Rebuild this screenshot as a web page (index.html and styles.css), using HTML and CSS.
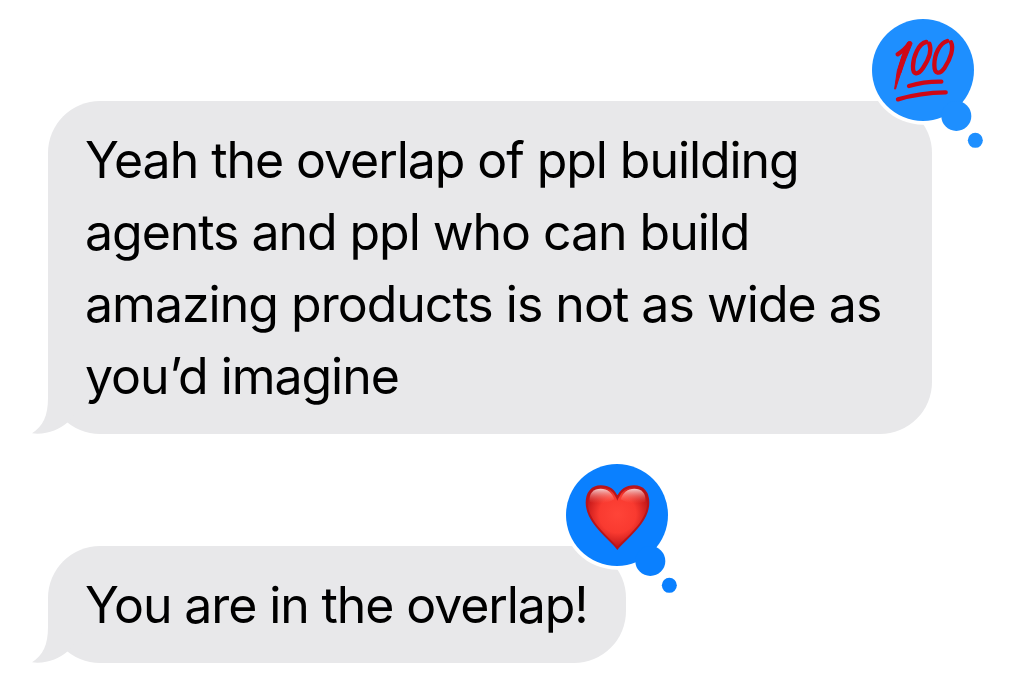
FILE: index.html
```html
<!DOCTYPE html>
<html lang="en">
<head>
    <meta charset="UTF-8">
    <meta name="viewport" content="width=device-width, initial-scale=1.0">
    <title>Messages</title>
    <link rel="stylesheet" href="styles.css">
</head>
<body>
    <main class="chat">
        <div class="bubble">
            <svg class="tail" viewBox="0 0 54 66" aria-hidden="true">
                <path d="M16 0V30C16 48 11 58 0 65.3C14 67 27 62 36 54L54 30V0Z"/>
            </svg>
            <p class="text">
                <span class="line line-1">Yeah the overlap of ppl building</span>
                <span class="line line-2">agents and ppl who can build</span>
                <span class="line line-3">amazing products is not as wide as</span>
                <span class="line line-4">you’d imagine</span>
            </p>
            <svg class="reaction hundred" viewBox="36 27 336 390" role="img" aria-label="100">
                <circle class="ring" cx="189" cy="180" r="164"/>
                <circle cx="189" cy="180" r="153"/>
                <circle cx="289" cy="318" r="45"/>
                <circle cx="346" cy="391" r="22.5"/>
                <g class="ink">
                    <path d="M113 133Q136 118 147 101Q126 150 119 184"/>
                    <path d="M104 236L112 182Q124 138 144 96Q156 92 156 101Q136 148 124 184Q113 215 107 236Z" class="brush"/>
                    <path d="M199 96C176 100 160 139 159 168C158 195 173 197 189 174C206 149 216 121 208 101"/>
                    <path d="M262 93C239 99 223 134 223 164C223 194 239 194 254 173C272 146 282 114 273 97"/>
                    <path d="M147 228Q194 214 244 215"/>
                    <path d="M114 268Q180 248 257 247"/>
                </g>
            </svg>
        </div>

        <div class="bubble short">
            <svg class="tail" viewBox="0 0 54 66" aria-hidden="true">
                <path d="M16 0V30C16 48 11 58 0 65.3C14 67 27 62 36 54L54 30V0Z"/>
            </svg>
            <p class="text">
                <span class="line line-5">You are in the overlap!</span>
            </p>
            <svg class="reaction heart" viewBox="36 27 336 390" role="img" aria-label="Heart">
                <defs>
                    <radialGradient id="heartFill" cx="0.5" cy="0.45" r="0.6">
                        <stop offset="0" stop-color="#ff4438"/>
                        <stop offset="0.5" stop-color="#f93a30"/>
                        <stop offset="1" stop-color="#b00a10"/>
                    </radialGradient>
                    <linearGradient id="heartShine" x1="0" y1="0" x2="0" y2="1">
                        <stop offset="0" stop-color="#fff" stop-opacity="0.8"/>
                        <stop offset="1" stop-color="#ff6a5c" stop-opacity="0"/>
                    </linearGradient>
                </defs>
                <circle class="ring" cx="189" cy="180" r="164"/>
                <circle cx="189" cy="180" r="153"/>
                <circle cx="289" cy="318" r="45"/>
                <circle cx="346" cy="391" r="22.5"/>
                <path class="heart-shape" d="M190 280C166 250 98 202 98 143C98 112 115 94 140 94C165 94 182 108 190 129C199 108 216 94 240 94C267 94 283 112 283 143C283 202 215 250 190 280Z"/>
                <path class="heart-shine" d="M107 140C104 114 119 101 140 101C160 101 174 112 181 133C160 147 129 149 107 140Z"/>
                <path class="heart-shine" d="M274 140C277 114 262 101 241 101C221 101 207 112 200 133C221 147 252 149 274 140Z"/>
            </svg>
        </div>
    </main>
</body>
</html>
```
FILE: styles.css
```css
* {
    box-sizing: border-box;
}

body {
    margin: 0;
    background-color: #fff;
    font-family: Inter, "Liberation Sans", sans-serif;
    color: #000;
}

.chat {
    display: flex;
    flex-direction: column;
    align-items: flex-start;
    gap: 112px;
    height: 699px;
    padding: 101px 0 0 48px;
    overflow: hidden;
}

.bubble {
    position: relative;
    width: 884px;
    padding: 23px 37px 22px;
    border-radius: 52px;
    background-color: #e8e8ea;
}

.bubble.short {
    width: 578px;
}

.text {
    margin: 0;
    font-size: 50px;
    line-height: 72px;
    white-space: nowrap;
}

.line {
    display: block;
}

.line-1 {
    letter-spacing: -1.06px;
}

.line-2 {
    letter-spacing: -1.05px;
}

.line-3 {
    letter-spacing: -0.99px;
}

.line-4 {
    letter-spacing: -1.05px;
}

.line-5 {
    letter-spacing: -1.1px;
}

/* little hook at the bottom left corner */
.tail {
    position: absolute;
    left: -16px;
    bottom: 0;
    width: 54px;
    height: 66px;
    fill: #e8e8ea;
}

/* thought bubble on the top right corner */
.reaction {
    position: absolute;
    top: -82px;
    right: -52px;
    width: 112px;
    height: 130px;
    overflow: visible;
    fill: #1e8fff;
}

.heart {
    fill: #0a80ff;
}

.ring {
    fill: #fff;
}

.ink {
    fill: none;
    stroke: #cf0716;
    stroke-width: 13;
    stroke-linecap: round;
    stroke-linejoin: round;
}

.brush {
    fill: #cf0716;
    stroke-width: 3;
}

.heart-shape {
    fill: url(#heartFill);
    stroke: #b8141a;
    stroke-width: 6;
}

.heart-shine {
    fill: url(#heartShine);
}
```
